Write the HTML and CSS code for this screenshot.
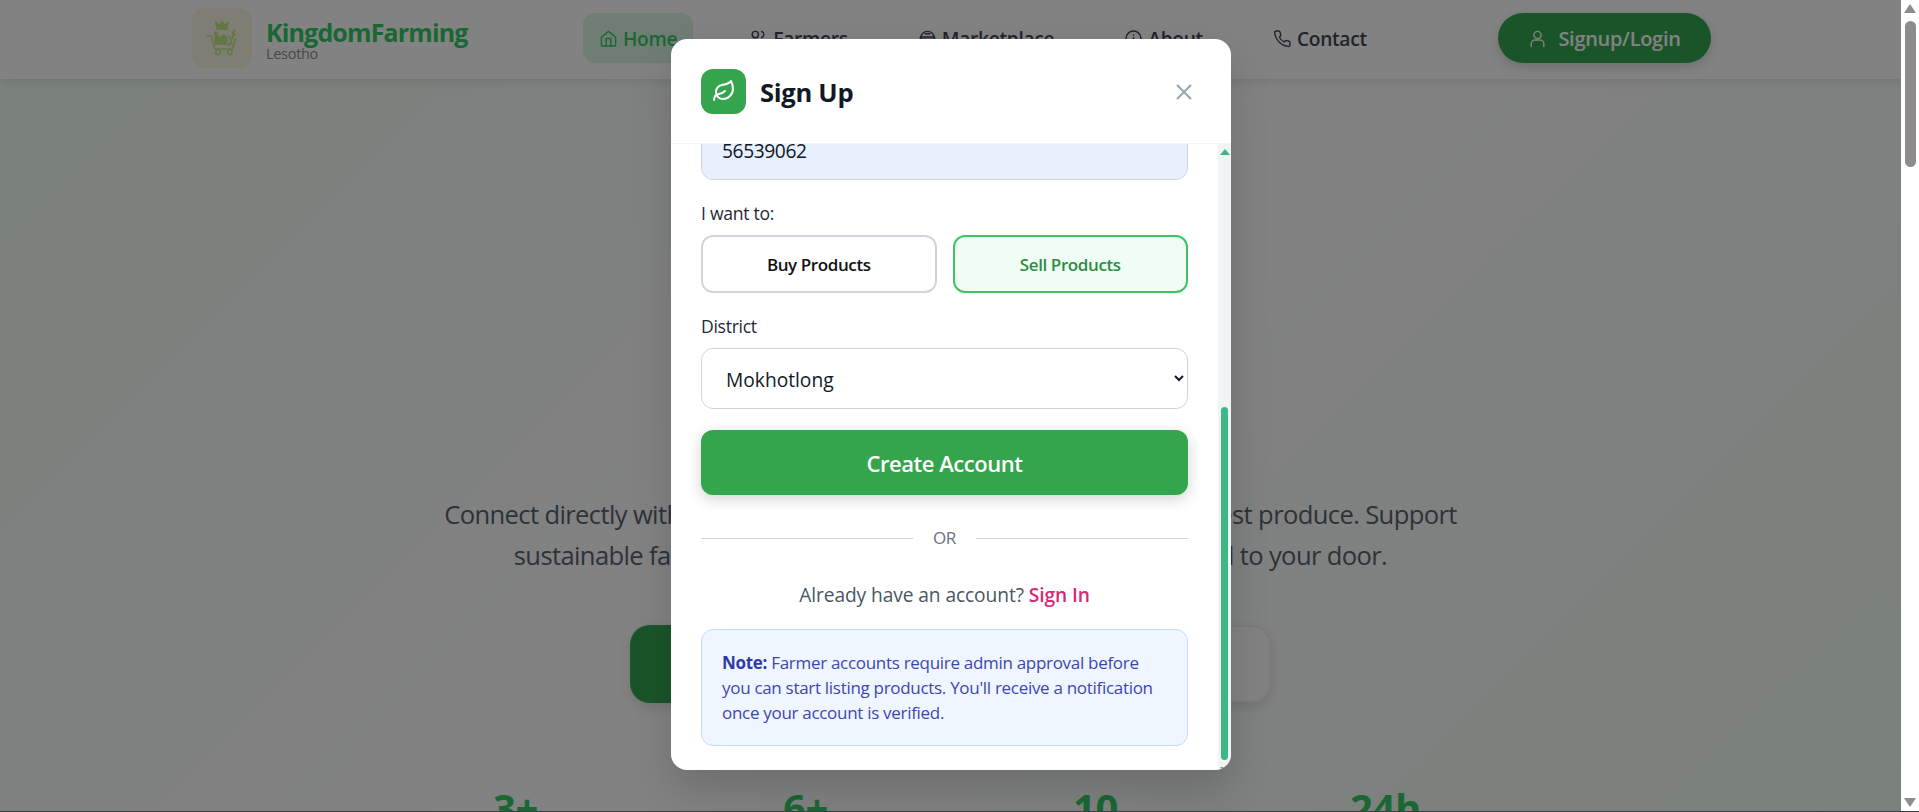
FILE: index.html
```html
<!DOCTYPE html>
<html lang="en">
<head>
  <meta charset="UTF-8">
  <meta name="viewport" content="width=device-width, initial-scale=1.0">
  <title>KingdomFarming Lesotho</title>
  <link rel="stylesheet" href="styles.css">
</head>
<body>
  <div class="window">
    <div class="page">
      <nav class="navbar">
        <div class="brand">
          <div class="brand-logo">
            <svg width="36" height="38" viewBox="0 0 44 48" fill="none" stroke="#c2e88a" stroke-width="1.800" stroke-linecap="round" stroke-linejoin="round">
              <path d="M16 13 L14 4 L19 8 L22 3 L25 8 L30 4 L28 13 Z" fill="#c2e88a"/>
              <path d="M3 21 H8 L13 38 H35 L39 25"/>
              <path d="M12 32 H37"/>
              <circle cx="17" cy="42" r="3"/>
              <circle cx="32" cy="42" r="3"/>
              <path d="M14 31 C11 25 15 20 20 23 C25 18 31 24 27 31 Z" fill="#c2e88a"/>
              <path d="M14 24 C12 20 12 18 14 16 C17 18 17 21 16 24 Z" fill="#c2e88a"/>
              <path d="M31 34 C35 27 37 21 36 15"/>
              <path d="M34 23 L39 19 M35 18 L39 14 M33 26 L30 21"/>
            </svg>
          </div>
          <div class="brand-text">
            <span class="brand-name">KingdomFarming</span>
            <span class="brand-sub">Lesotho</span>
          </div>
        </div>
        <div class="nav-links">
          <a class="nav-link active">
            <svg class="nav-icon" viewBox="0 0 24 24"><path d="M3 10.500 12 3l9 7.500V20a1.500 1.500 0 0 1-1.500 1.500h-15A1.500 1.500 0 0 1 3 20z"/><path d="M9 21.500V12h6v9.500"/></svg>
            Home
          </a>
          <a class="nav-link">
            <svg class="nav-icon" viewBox="0 0 24 24"><circle cx="8" cy="7" r="4"/><path d="M2 21v-2a5 5 0 0 1 5-5h3a5 5 0 0 1 5 5v2"/><path d="M16 3.200a4 4 0 0 1 0 7.600"/><path d="M22 21v-2a5 5 0 0 0-3.500-4.800"/></svg>
            Farmers
          </a>
          <a class="nav-link">
            <svg class="nav-icon" viewBox="0 0 24 24"><path d="M4 10a8 7 0 0 1 16 0"/><path d="M3 10h18v3H3z"/><path d="M5 13l1 8h12l1-8"/><path d="M9 6h6"/></svg>
            Marketplace
          </a>
          <a class="nav-link">
            <svg class="nav-icon" viewBox="0 0 24 24"><circle cx="12" cy="12" r="9.500"/><path d="M12 11v6"/><path d="M12 7.500v.5"/></svg>
            About
          </a>
          <a class="nav-link">
            <svg class="nav-icon" viewBox="0 0 24 24"><path d="M21.500 17v3a2 2 0 0 1-2.200 2A19.800 19.800 0 0 1 2.100 4.700 2 2 0 0 1 4 2.500h3a2 2 0 0 1 2 1.700c.1 1 .4 1.900.7 2.800a2 2 0 0 1-.5 2.100L8 10.400a16 16 0 0 0 6 6l1.300-1.300a2 2 0 0 1 2.100-.4c.9.300 1.800.600 2.800.700a2 2 0 0 1 1.300 1.600z"/></svg>
            Contact
          </a>
        </div>
        <a class="signup-btn">
          <svg class="nav-icon" viewBox="0 0 24 24"><circle cx="12" cy="7.500" r="4.500"/><path d="M4 22v-3a5 5 0 0 1 5-5h6a5 5 0 0 1 5 5v3"/></svg>
          Signup/Login
        </a>
      </nav>

      <section class="hero">
        <p class="hero-text">Connect directly with trusted farmers all across Lesotho for the freshest produce. Support<br>sustainable farming and you get high-quality products delivered to your door.</p>
        <div class="hero-actions">
          <a class="hero-btn primary">Browse Products</a>
          <a class="hero-btn secondary">Join as a Farmer</a>
        </div>
        <div class="stats">
          <div class="stat">3+</div>
          <div class="stat">6+</div>
          <div class="stat">10</div>
          <div class="stat">24h</div>
        </div>
      </section>

      <div class="overlay">
        <div class="modal">
          <div class="modal-header">
            <div class="modal-logo">
              <svg width="24" height="24" viewBox="0 0 24 24" fill="none" stroke="#fff" stroke-width="2" stroke-linecap="round" stroke-linejoin="round">
                <path d="M11 20A7 7 0 0 1 9.800 6.100C15.500 5 17 4.480 19 2c1 2 2 4.180 2 8 0 5.500-4.780 10-10 10Z"/>
                <path d="M2 21c0-3 1.850-5.360 5.080-6C9.500 14.520 12 13 13 12"/>
              </svg>
            </div>
            <h2 class="modal-title">Sign Up</h2>
            <button class="modal-close" aria-label="Close">
              <svg width="24" height="24" viewBox="0 0 24 24" fill="none" stroke="#9ca3af" stroke-width="2" stroke-linecap="round"><path d="M5.500 5.500l13 13M18.500 5.500l-13 13"/></svg>
            </button>
          </div>
          <div class="modal-body">
            <div class="modal-content">
              <input class="field phone" type="text" value="56539062">
              <label class="field-label role-label">I want to:</label>
              <div class="role-options">
                <button class="role-btn">Buy Products</button>
                <button class="role-btn selected">Sell Products</button>
              </div>
              <label class="field-label district-label" for="district">District</label>
              <select class="field district" id="district">
                <option>Mokhotlong</option>
              </select>
              <button class="submit-btn">Create Account</button>
              <div class="divider"><span>OR</span></div>
              <p class="switch-text">Already have an account? <a class="switch-link">Sign In</a></p>
              <div class="note"><strong>Note:</strong> Farmer accounts require admin approval before you can start listing products. You'll receive a notification once your account is verified.</div>
            </div>
            <div class="modal-scrollbar">
              <span class="modal-arrow up"></span>
              <span class="modal-thumb"></span>
              <span class="modal-arrow down"></span>
            </div>
          </div>
        </div>
      </div>
    </div>

    <div class="page-scrollbar">
      <span class="page-arrow up"></span>
      <span class="page-thumb"></span>
      <span class="page-arrow down"></span>
    </div>
  </div>
</body>
</html>
```

FILE: styles.css
```css
* {
  box-sizing: border-box;
}

body {
  margin: 0;
  font-family: "Open Sans", "Noto Sans", Arial, sans-serif;
  letter-spacing: -0.3px;
  overflow: hidden;
}

a {
  text-decoration: none;
}

.window {
  display: flex;
  height: 812px;
  overflow: hidden;
  border-bottom: 1px solid #3a3f42;
}

.page {
  position: relative;
  flex: 1;
  overflow: hidden;
  background: linear-gradient(135deg, #f0fdf4 0%, #ffffff 50%, #f0fdf4 100%);
}

/* navbar */
.navbar {
  display: flex;
  align-items: center;
  height: 79px;
  padding: 0 190px 3px 192px;
  background-color: #fff;
  box-shadow: 0 2px 10px rgba(0, 0, 0, 0.12);
}

.brand {
  display: flex;
  align-items: center;
  gap: 14px;
  width: 391px;
}

.brand-logo {
  display: flex;
  align-items: center;
  justify-content: center;
  width: 60px;
  height: 60px;
  background-color: #faf8e6;
  border-radius: 12px;
}

.brand-text {
  display: flex;
  flex-direction: column;
  padding-top: 2px;
}

.brand-name {
  font-size: 25px;
  font-weight: 700;
  line-height: 30px;
  color: #36ca67;
  letter-spacing: -0.85px;
}

.brand-sub {
  font-size: 14.500px;
  line-height: 14px;
  color: #8d8d96;
  letter-spacing: -0.3px;
}

.nav-links {
  display: flex;
  align-items: center;
  flex: 1;
  gap: 38px;
}

.nav-link {
  display: flex;
  align-items: center;
  gap: 5px;
  height: 50px;
  padding: 0 16px;
  font-size: 19.200px;
  font-weight: 600;
  color: #3f4756;
}

.nav-link.active {
  margin-right: 2px;
  background-color: #dcf5e3;
  border-radius: 12px;
  color: #36ca67;
}

.nav-icon {
  width: 19px;
  height: 19px;
  flex-shrink: 0;
  fill: none;
  stroke: currentColor;
  stroke-width: 1.800;
  stroke-linecap: round;
  stroke-linejoin: round;
}

.signup-btn {
  display: flex;
  align-items: center;
  justify-content: center;
  gap: 11px;
  width: 213px;
  height: 50px;
  background-color: #34a853;
  border-radius: 25px;
  box-shadow: 0 4px 12px rgba(0, 0, 0, 0.15);
  color: #fff;
  font-size: 20px;
  font-weight: 600;
}

/* hero */
.hero {
  display: flex;
  flex-direction: column;
  align-items: center;
  padding-top: 415px;
}

.hero-text {
  margin: 0;
  font-size: 25.600px;
  line-height: 41px;
  letter-spacing: -0.64px;
  text-align: center;
  white-space: nowrap;
  color: #5b6470;
}

.hero-actions {
  display: flex;
  gap: 16px;
  margin-top: 49px;
}

.hero-btn {
  display: flex;
  align-items: center;
  justify-content: center;
  height: 78px;
  border-radius: 20px;
  font-size: 20px;
  font-weight: 600;
  box-shadow: 0 4px 12px rgba(0, 0, 0, 0.12);
}

.hero-btn.primary {
  width: 312px;
  background-color: #34a853;
  color: #fff;
}

.hero-btn.secondary {
  width: 313px;
  background-color: #fff;
  border: 2px solid #f1f1f1;
  color: #36ca67;
}

.stats {
  display: grid;
  grid-template-columns: repeat(4, 290px);
  margin-top: 83px;
}

.stat {
  font-size: 40px;
  font-weight: 700;
  line-height: 44px;
  text-align: center;
  color: #36ca67;
}

/* signup modal */
.overlay {
  position: absolute;
  inset: 0;
  background-color: rgba(0, 0, 0, 0.49);
}

.modal {
  position: absolute;
  top: 39px;
  left: 671px;
  display: flex;
  flex-direction: column;
  width: 560px;
  height: 731px;
  background-color: #fff;
  border-radius: 16px;
  overflow: hidden;
  box-shadow: 0 20px 40px rgba(0, 0, 0, 0.15);
}

.modal-header {
  display: flex;
  align-items: center;
  flex-shrink: 0;
  height: 105px;
  padding: 0 30px;
  border-bottom: 1px solid #f3f4f6;
}

.modal-logo {
  display: flex;
  align-items: center;
  justify-content: center;
  width: 45px;
  height: 45px;
  background-color: #34a44d;
  border-radius: 12px;
}

.modal-title {
  margin: 2px 0 0 14px;
  flex: 1;
  font-size: 25.600px;
  font-weight: 700;
  color: #111827;
}

.modal-close {
  display: flex;
  padding: 0;
  margin: 1px 5px 0 0;
  background: none;
  border: none;
}

.modal-body {
  position: relative;
  flex: 1;
  overflow: hidden;
}

.modal-content {
  width: 547px;
  padding: 0 30px;
  margin-top: -25px;
}

.field {
  display: block;
  width: 100%;
  height: 61px;
  padding: 0 20px;
  border: 1px solid #d1d5db;
  border-radius: 12px;
  font-family: inherit;
  font-size: 19.200px;
  color: #111827;
}

.field.phone {
  padding-top: 2px;
  background-color: #e8f0fe;
  letter-spacing: -0.4px;
}

.field.district {
  padding-top: 2px;
  background-color: #fff;
  letter-spacing: 0;
}

.field-label {
  display: block;
  font-size: 17.600px;
  font-weight: 500;
  line-height: 22px;
  color: #1f2937;
}

.role-label {
  margin-top: 22px;
}

.district-label {
  margin-top: 22px;
}

.role-options {
  display: flex;
  gap: 16px;
  margin-top: 11px;
}

.role-btn {
  flex: 1;
  height: 58px;
  background-color: #fff;
  border: 2px solid #d1d5db;
  border-radius: 12px;
  font-family: inherit;
  font-size: 17px;
  font-weight: 600;
  letter-spacing: -0.4px;
  color: #111;
}

.role-btn.selected {
  background-color: #f0fdf4;
  border-color: #40c463;
  color: #2e8b47;
}

.district {
  margin-top: 11px;
}

.submit-btn {
  display: block;
  width: 100%;
  height: 65px;
  margin-top: 21px;
  background-color: #34a44d;
  border: none;
  border-radius: 12px;
  box-shadow: 0 4px 15px rgba(0, 0, 0, 0.18);
  font-family: inherit;
  font-size: 22px;
  font-weight: 600;
  letter-spacing: -0.45px;
  color: #fff;
}

.divider {
  display: flex;
  align-items: center;
  gap: 20px;
  margin-top: 32px;
  font-size: 17px;
  line-height: 22px;
  color: #6b7280;
}

.divider::before,
.divider::after {
  content: "";
  flex: 1;
  height: 1px;
  background-color: #d1d5db;
}

.switch-text {
  margin: 34px 0 0;
  font-size: 19.200px;
  line-height: 24px;
  letter-spacing: -0.1px;
  text-align: center;
  color: #4b5563;
}

.switch-link {
  font-weight: 600;
  color: #db2777;
}

.note {
  margin-top: 22px;
  padding: 20px;
  background-color: #eff6ff;
  border: 1px solid #bfdbfe;
  border-radius: 12px;
  font-size: 17px;
  line-height: 25px;
  color: #3b46b4;
}

.note strong {
  color: #2f3ba8;
}

.modal-scrollbar {
  position: absolute;
  top: 0;
  right: 0;
  bottom: 0;
  width: 13px;
  background-color: #f1f3f5;
}

.modal-thumb {
  position: absolute;
  top: 263px;
  left: 3px;
  width: 7px;
  height: 353px;
  background-color: #3cb882;
  border-radius: 4px;
}

.modal-arrow {
  position: absolute;
  left: 2px;
  width: 0;
  height: 0;
  border-left: 5px solid transparent;
  border-right: 5px solid transparent;
}

.modal-arrow.up {
  top: 5px;
  border-bottom: 6px solid #3cb882;
}

.modal-arrow.down {
  bottom: -3px;
  border-top: 6px solid #3cb882;
}

/* page scrollbar */
.page-scrollbar {
  position: relative;
  width: 18px;
  background-color: #fff;
}

.page-thumb {
  position: absolute;
  top: 21px;
  left: 4px;
  width: 11px;
  height: 146px;
  background-color: #8c8c8c;
  border-radius: 6px;
}

.page-arrow {
  position: absolute;
  left: 3px;
  width: 0;
  height: 0;
  border-left: 6px solid transparent;
  border-right: 6px solid transparent;
}

.page-arrow.up {
  top: 4px;
  border-bottom: 9px solid #8c8c8c;
}

.page-arrow.down {
  bottom: 4px;
  border-top: 9px solid #8c8c8c;
}
```
